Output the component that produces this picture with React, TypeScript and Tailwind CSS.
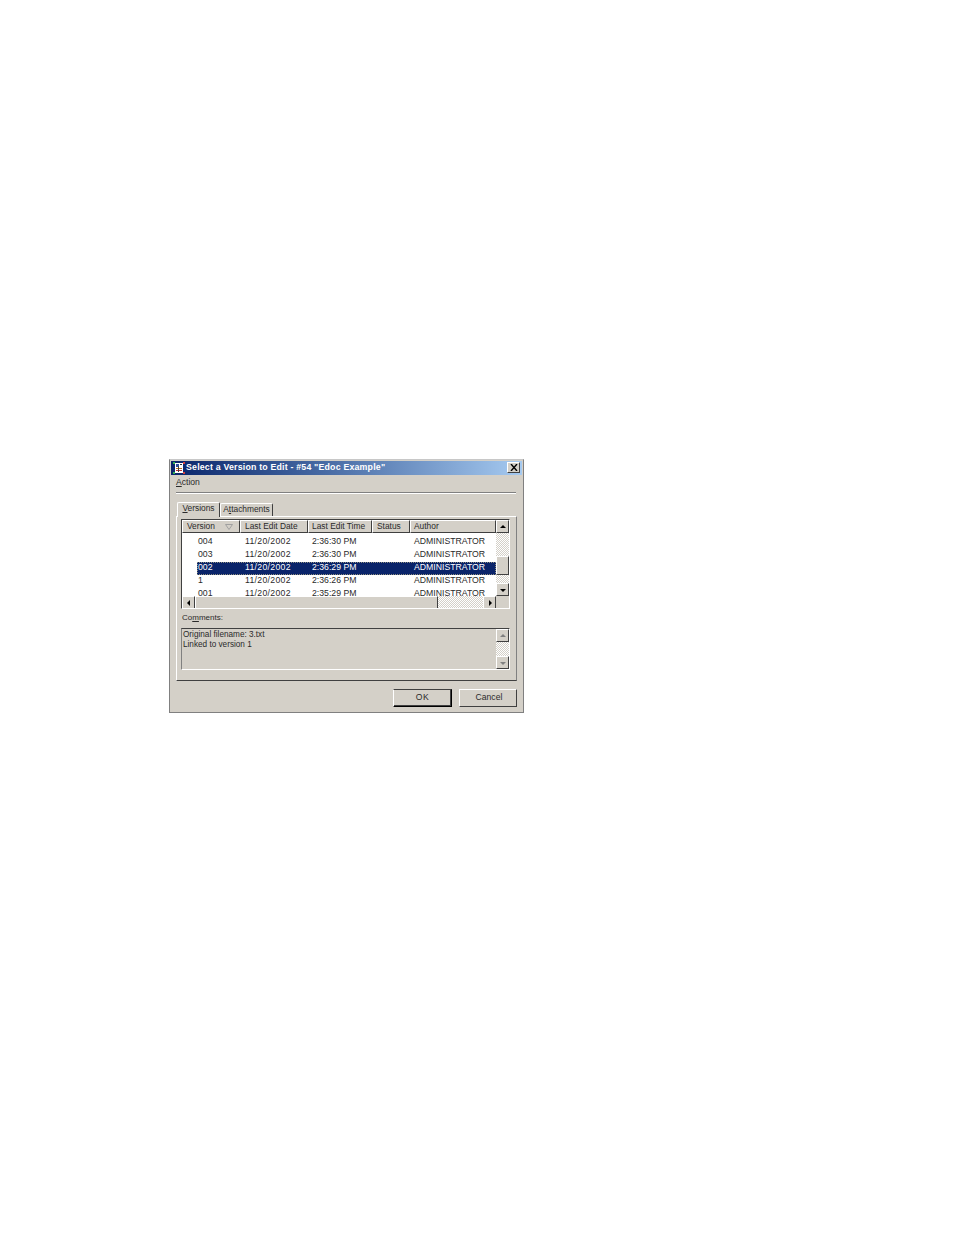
const raised = "border border-t-white border-l-white border-r-[#404040] border-b-[#404040] bg-[#d4d0c8]";
const dither = "bg-[repeating-conic-gradient(#d4d0c8_0_25%,#ffffff_0_50%)] bg-[length:2px_2px]";

const columns = [
  { label: "Version", width: "w-[58px]", pad: "pl-[4px]" },
  { label: "Last Edit Date", width: "w-[68px]", pad: "pl-[4px]" },
  { label: "Last Edit Time", width: "w-[64px]", pad: "pl-[3px]" },
  { label: "Status", width: "w-[38px]", pad: "pl-[4px]" },
  { label: "Author", width: "w-[86px]", pad: "pl-[3px]" },
];

const rows = [
  { version: "004", time: "2:36:30 PM" },
  { version: "003", time: "2:36:30 PM" },
  { version: "002", time: "2:36:29 PM", selected: true },
  { version: "1", time: "2:36:26 PM" },
  { version: "001", time: "2:35:29 PM" },
];

function Arrow({ dir, muted }: { dir: "up" | "down" | "left" | "right"; muted?: boolean }) {
  const points = {
    up: "1,5 4,2 7,5",
    down: "1,3 4,6 7,3",
    left: "5,1 2,4 5,7",
    right: "3,1 6,4 3,7",
  }[dir];
  return (
    <svg width="8" height="8" viewBox="0 0 8 8">
      <polygon points={points} fill={muted ? "#808080" : "#000000"} />
    </svg>
  );
}

function ScrollButton({ dir, muted, className }: { dir: "up" | "down" | "left" | "right"; muted?: boolean; className: string }) {
  return (
    <div className={`${raised} flex items-center justify-center shrink-0 ${className}`}>
      <Arrow dir={dir} muted={muted} />
    </div>
  );
}

export default function App() {
  return (
    <div className="min-h-[1235px] bg-white pt-[459px] pl-[169px] font-['Liberation_Sans',sans-serif] text-[8.4px] leading-none text-[#2a2a2a]">
      <div className="w-[355px] h-[254px] bg-[#d4d0c8] border border-[#808080] border-t-[#c8c8c8] p-px flex flex-col">
        {/* title bar */}
        <div className="h-[14px] flex items-center bg-gradient-to-r from-[#0a246a] to-[#a6caf0] pl-[2px] pr-[2px] pb-px shrink-0">
          <svg width="12" height="12" viewBox="0 0 12 12" className="shrink-0">
            <rect x="2" y="1" width="8" height="10" fill="#ffffff" />
            <rect x="3" y="2" width="3" height="3" fill="#3050a0" />
            <rect x="7" y="2" width="2" height="1" fill="#333333" />
            <rect x="3" y="6" width="6" height="1" fill="#c07020" />
            <rect x="3" y="8" width="6" height="1" fill="#c03030" />
            <rect x="5" y="4" width="1" height="6" fill="#404040" />
            <rect x="0" y="0" width="2" height="2" fill="#30b050" />
            <rect x="10" y="0" width="2" height="2" fill="#d04040" />
            <rect x="0" y="10" width="2" height="2" fill="#30b050" />
            <rect x="10" y="10" width="2" height="2" fill="#d04040" />
          </svg>
          <span className="ml-px text-white font-bold text-[8.8px] tracking-[0.19px] whitespace-nowrap">
            Select a Version to Edit - #54 "Edoc Example"
          </span>
          <div className={`${raised} ml-auto w-[13px] h-[11px] flex items-center justify-center`}>
            <svg width="8" height="7" viewBox="0 0 8 7">
              <path d="M1 0 L7 7 M7 0 L1 7" stroke="#000" strokeWidth="1.4" />
            </svg>
          </div>
        </div>

        {/* menu */}
        <div className="h-[17px] pl-[5px] pb-[2px] flex items-center shrink-0">
          <span className="text-[8.6px]"><span className="underline">A</span>ction</span>
        </div>
        <div className="h-px bg-[#808080] ml-[5px] mr-[6px] shrink-0" />
        <div className="h-px bg-white ml-[5px] mr-[6px] shrink-0" />

        {/* tabs */}
        <div className="ml-[6px] mt-[7px] flex items-end h-[15px] shrink-0">
          <div className="h-[15px] w-[43px] pb-[3px] bg-[#d4d0c8] border border-b-0 border-t-white border-l-white border-r-[#404040] rounded-t-[2px] flex items-center justify-center relative z-10 -mb-px">
            <span><span className="underline">V</span>ersions</span>
          </div>
          <div className="h-[13px] w-[53px] pb-[2px] bg-[#d4d0c8] border border-b-0 border-t-white border-l-white border-r-[#404040] rounded-t-[2px] flex items-center justify-center">
            <span>A<span className="underline">t</span>tachments</span>
          </div>
        </div>

        {/* tab panel */}
        <div className="ml-[5px] w-[341px] h-[165px] border border-t-white border-l-white border-r-[#808080] border-b-[#404040] px-[4px] pt-[2px] flex flex-col shrink-0">
          {/* version list */}
          <div className="w-[329px] h-[90px] border border-t-[#404040] border-l-[#404040] border-r-white border-b-white flex flex-col overflow-hidden shrink-0 bg-white">
            <div className="flex h-[76px] shrink-0">
              <div className="w-[314px] shrink-0 flex flex-col overflow-hidden">
                <div className="flex h-[13px] shrink-0">
                  {columns.map((c, i) => (
                    <div key={c.label} className={`${raised} ${c.width} ${c.pad} shrink-0 flex items-center`}>
                      {c.label}
                      {i === 0 && (
                        <svg width="8" height="6" viewBox="0 0 8 6" className="ml-[10px]">
                          <path d="M0.5 0.5 H7.5 L4 5.5 Z" fill="none" stroke="#a0a0a0" />
                        </svg>
                      )}
                    </div>
                  ))}
                </div>
                <div className="pt-[3px] text-[8.7px]">
                  {rows.map((r) => (
                    <div key={r.version} className="h-[13px] flex items-center">
                      <div className="w-[15px] shrink-0" />
                      <div
                        className={`flex items-center h-[13px] w-[299px] pb-[2px] ${
                          r.selected ? "bg-[#0a246a] text-white outline-dotted outline-1 -outline-offset-1 outline-[#8f8f80]" : ""
                        }`}
                      >
                        <span className="w-[48px] pl-[1px]">{r.version}</span>
                        <span className="w-[67px] tracking-[0.3px]">11/20/2002</span>
                        <span className="w-[102px]">{r.time}</span>
                        <span>ADMINISTRATOR</span>
                      </div>
                    </div>
                  ))}
                </div>
              </div>
              {/* vertical scrollbar */}
              <div className={`w-[13px] flex flex-col shrink-0 ${dither}`}>
                <ScrollButton dir="up" className="h-[13px]" />
                <div className="h-[23px]" />
                <div className={`${raised} h-[19px] shrink-0`} />
                <div className="flex-1" />
                <ScrollButton dir="down" className="h-[13px]" />
              </div>
            </div>
            {/* horizontal scrollbar */}
            <div className="h-[13px] flex bg-[#d4d0c8] shrink-0">
              <ScrollButton dir="left" className="w-[13px]" />
              <div className={`${raised} w-[243px] shrink-0`} />
              <div className={`${dither} flex-1`} />
              <ScrollButton dir="right" className="w-[13px]" />
              <div className="w-[13px] shrink-0" />
            </div>
          </div>

          <div className="mt-[3px] h-[12px] pl-[1px] flex items-center shrink-0">
            <span className="text-[8px]">Co<span className="underline">m</span>ments:</span>
          </div>

          {/* comments */}
          <div className="mt-[4px] w-[329px] h-[42px] border border-t-[#404040] border-l-[#808080] border-r-white border-b-white flex shrink-0">
            <div className="flex-1 pl-[1px] pt-[1px] leading-[10px] text-[8.2px]">
              <p>Original filename: 3.txt</p>
              <p>Linked to version 1</p>
            </div>
            <div className={`w-[13px] flex flex-col shrink-0 ${dither}`}>
              <ScrollButton dir="up" muted className="h-[13px]" />
              <div className="flex-1" />
              <ScrollButton dir="down" muted className="h-[13px]" />
            </div>
          </div>
        </div>

        {/* buttons */}
        <div className="mt-[8px] ml-[222px] flex gap-[7px] text-[8.6px]">
          <button className="w-[59px] h-[18px] pb-[2px] tracking-[0.5px] bg-[#d4d0c8] border border-[#000] border-t-[#404040] border-l-white shadow-[inset_-1px_-1px_0_#404040]">OK</button>
          <button className="w-[58px] h-[18px] pb-[2px] pl-[2px] bg-[#d4d0c8] border border-t-white border-l-white border-r-[#404040] border-b-[#404040]">Cancel</button>
        </div>
      </div>
    </div>
  );
}
